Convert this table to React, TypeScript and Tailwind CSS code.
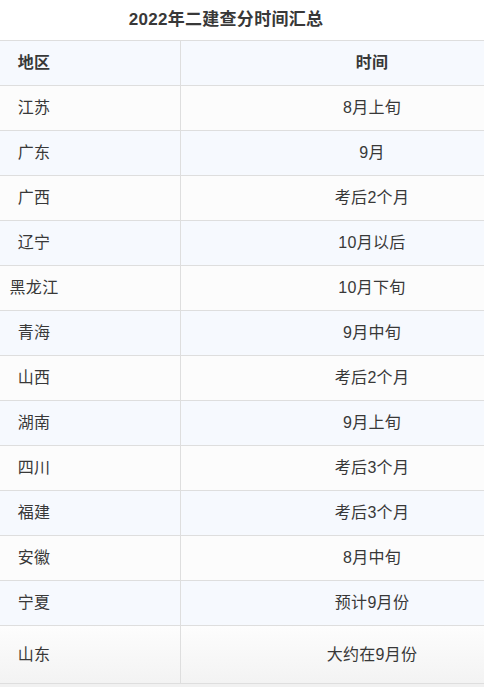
const rows: { region: string; time: string }[] = [
  { region: "江苏", time: "8月上旬" },
  { region: "广东", time: "9月" },
  { region: "广西", time: "考后2个月" },
  { region: "辽宁", time: "10月以后" },
  { region: "黑龙江", time: "10月下旬" },
  { region: "青海", time: "9月中旬" },
  { region: "山西", time: "考后2个月" },
  { region: "湖南", time: "9月上旬" },
  { region: "四川", time: "考后3个月" },
  { region: "福建", time: "考后3个月" },
  { region: "安徽", time: "8月中旬" },
  { region: "宁夏", time: "预计9月份" },
];

export default function App() {
  return (
    <div className="h-[687px] w-[484px] overflow-hidden bg-[#f1f1f1] font-['Liberation_Sans','Noto_Sans_CJK_SC',sans-serif] text-[16px] tracking-[0.3px] text-[#383838]">
      <div className="bg-white">
        <div className="flex h-[40px] items-center justify-center pr-[32px] text-[17px] font-bold">
          2022年二建查分时间汇总
        </div>
        <div className="border-t border-[#dedede]">
          <div className="flex h-[45px] items-center border-b border-[#dedede] bg-[#f6f9fe] font-bold">
            <div className="flex h-full w-[181px] items-center border-r border-[#dedede]">
              <div className="ml-[4px] w-[60px] whitespace-nowrap text-center">地区</div>
            </div>
            <div className="flex-1 whitespace-nowrap pl-[79px] text-center">时间</div>
          </div>
          {rows.map((row, i) => (
            <div
              key={row.region}
              className={
                "flex h-[45px] items-center border-b border-[#dedede] " +
                (i % 2 === 0 ? "bg-[#fcfcfc]" : "bg-[#f6f9fe]")
              }
            >
              <div className="flex h-full w-[181px] items-center border-r border-[#dedede]">
                <div className="ml-[4px] w-[60px] whitespace-nowrap text-center">{row.region}</div>
              </div>
              <div className="flex-1 whitespace-nowrap pl-[79px] text-center">{row.time}</div>
            </div>
          ))}
          <div className="flex h-[58px] items-center border-b border-[#dedede] bg-gradient-to-b from-[#fdfdfd] to-[#f3f3f3]">
            <div className="flex h-full w-[181px] items-center border-r border-[#dedede]">
              <div className="ml-[4px] w-[60px] whitespace-nowrap text-center">山东</div>
            </div>
            <div className="flex-1 whitespace-nowrap pl-[79px] text-center">大约在9月份</div>
          </div>
        </div>
      </div>
    </div>
  );
}
